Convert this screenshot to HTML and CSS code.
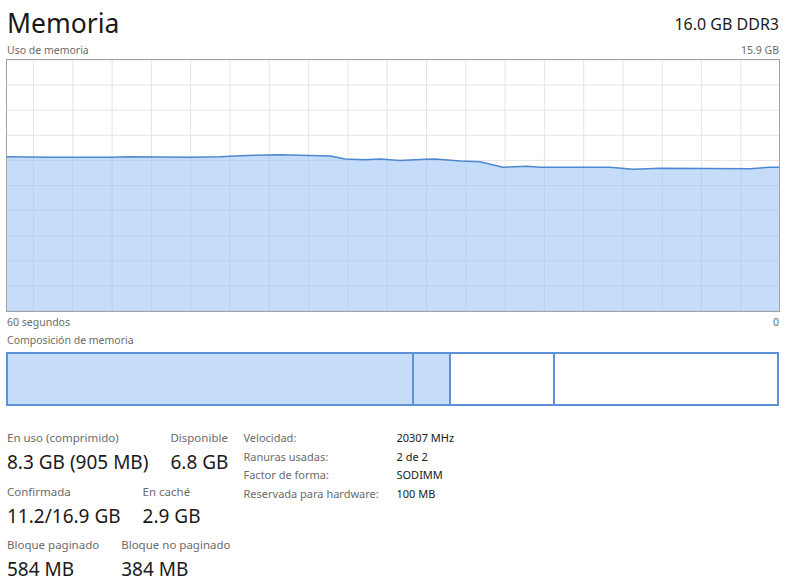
FILE: index.html
```html
<!DOCTYPE html>
<html lang="es">
<head>
    <meta charset="UTF-8">
    <title>Memoria</title>
    <link rel="stylesheet" href="styles.css">
</head>
<body>
    <div class="page">
        <div class="header">
            <h1 class="title">Memoria</h1>
            <div class="subtitle">16.0 GB DDR3</div>
        </div>

        <div class="caption-row">
            <span>Uso de memoria</span>
            <span>15.9 GB</span>
        </div>

        <div class="graph">
            <svg width="772" height="251" viewBox="0 0 772 251">
                <defs>
                    <pattern id="grid" patternUnits="userSpaceOnUse" x="26" y="-0.5" width="39.3" height="25.1">
                        <path d="M0.5 0 V25.1 M0 0.5 H39.3" stroke="#e4e4e4" stroke-width="1" fill="none"/>
                    </pattern>
                </defs>
                <rect width="772" height="251" fill="url(#grid)"/>
                <polygon class="usage-fill" points="0,96.7 43,97.3 103,97.3 123,96.7 183,97.3 213,96.7 233,95.7 273,94.7 293,95.3 323,96 338,99 358,99.7 373,99 393,100.5 418,99.3 428,99 453,101 473,101.7 496,107.3 520,106.3 533,107.3 603,107.3 626,109.3 653,108.3 743,108.7 763,107.3 772,107.3 772,251 0,251"/>
                <polyline class="usage-line" points="0,96.7 43,97.3 103,97.3 123,96.7 183,97.3 213,96.7 233,95.7 273,94.7 293,95.3 323,96 338,99 358,99.7 373,99 393,100.5 418,99.3 428,99 453,101 473,101.7 496,107.3 520,106.3 533,107.3 603,107.3 626,109.3 653,108.3 743,108.7 763,107.3 772,107.3"/>
            </svg>
        </div>

        <div class="caption-row axis">
            <span>60 segundos</span>
            <span>0</span>
        </div>

        <div class="caption-row">
            <span>Composición de memoria</span>
        </div>

        <div class="composition">
            <div class="seg seg-inuse"></div>
            <div class="seg seg-modified"></div>
            <div class="seg seg-standby"></div>
            <div class="seg seg-free"></div>
        </div>

        <div class="stats">
            <div class="stats-main">
                <div class="stat-row">
                    <div class="stat">
                        <div class="stat-label">En uso (comprimido)</div>
                        <div class="stat-value">8.3 GB (905 MB)</div>
                    </div>
                    <div class="stat">
                        <div class="stat-label">Disponible</div>
                        <div class="stat-value">6.8 GB</div>
                    </div>
                </div>
                <div class="stat-row">
                    <div class="stat">
                        <div class="stat-label">Confirmada</div>
                        <div class="stat-value">11.2/16.9 GB</div>
                    </div>
                    <div class="stat">
                        <div class="stat-label">En caché</div>
                        <div class="stat-value">2.9 GB</div>
                    </div>
                </div>
                <div class="stat-row">
                    <div class="stat">
                        <div class="stat-label">Bloque paginado</div>
                        <div class="stat-value">584 MB</div>
                    </div>
                    <div class="stat">
                        <div class="stat-label">Bloque no paginado</div>
                        <div class="stat-value">384 MB</div>
                    </div>
                </div>
            </div>

            <div class="details">
                <div class="detail-label">Velocidad:</div>
                <div class="detail-value">20307 MHz</div>
                <div class="detail-label">Ranuras usadas:</div>
                <div class="detail-value">2 de 2</div>
                <div class="detail-label">Factor de forma:</div>
                <div class="detail-value">SODIMM</div>
                <div class="detail-label">Reservada para hardware:</div>
                <div class="detail-value">100 MB</div>
            </div>
        </div>
    </div>
</body>
</html>
```

FILE: styles.css
```css
body {
    margin: 0;
    background: #fff;
    font-family: "Noto Sans", "Open Sans", sans-serif;
    color: #1a1a1a;
}

.page {
    padding: 0 21px 0 6px;
    width: 773px;
}

.header {
    display: flex;
    justify-content: space-between;
    align-items: flex-end;
    height: 41px;
}

.title {
    margin: 0;
    font-weight: normal;
    font-size: 26.5px;
    line-height: 36px;
    padding-left: 1px;
}

.subtitle {
    font-size: 16px;
    line-height: 24px;
    padding-bottom: 5px;
}

.caption-row {
    display: flex;
    justify-content: space-between;
    font-size: 10.5px;
    line-height: 18px;
    color: #6b6b6b;
    padding-left: 1px;
}

.caption-row.axis {
    margin-top: 1px;
}

.graph {
    width: 772px;
    height: 251px;
    border: 1px solid #a3a3a3;
}

.graph svg {
    display: block;
}

.usage-fill {
    fill: rgb(139, 188, 245);
    fill-opacity: 0.5;
}

.usage-line {
    fill: none;
    stroke: #4d88d1;
    stroke-width: 1.5;
    stroke-linejoin: round;
}

.composition {
    display: flex;
    height: 50px;
    border: 2px solid #5b92d8;
    margin-top: 3px;
}

.seg {
    height: 100%;
}

.seg-inuse {
    width: 404px;
    background: #c6ddfa;
}

.seg-modified {
    width: 35px;
    background: #c6ddfa;
    border-left: 2px solid #5b92d8;
}

.seg-standby {
    width: 102px;
    border-left: 2px solid #5b92d8;
}

.seg-free {
    flex: 1;
    border-left: 2px solid #5b92d8;
}

.stats {
    display: flex;
    gap: 13px;
    margin-top: 24px;
    padding-left: 1px;
}

.stat-row {
    display: flex;
    gap: 22px;
    margin-bottom: 5.5px;
}

.stat-label {
    font-size: 11.5px;
    line-height: 16px;
    color: #6b6b6b;
}

.stat-value {
    font-size: 19px;
    line-height: 32px;
}

.details {
    display: grid;
    grid-template-columns: 153px auto;
    grid-auto-rows: 18.5px;
    font-size: 11px;
    line-height: 16px;
    align-content: start;
}

.detail-label {
    color: #6b6b6b;
}

.detail-value {
    color: #1a1a1a;
}
```
